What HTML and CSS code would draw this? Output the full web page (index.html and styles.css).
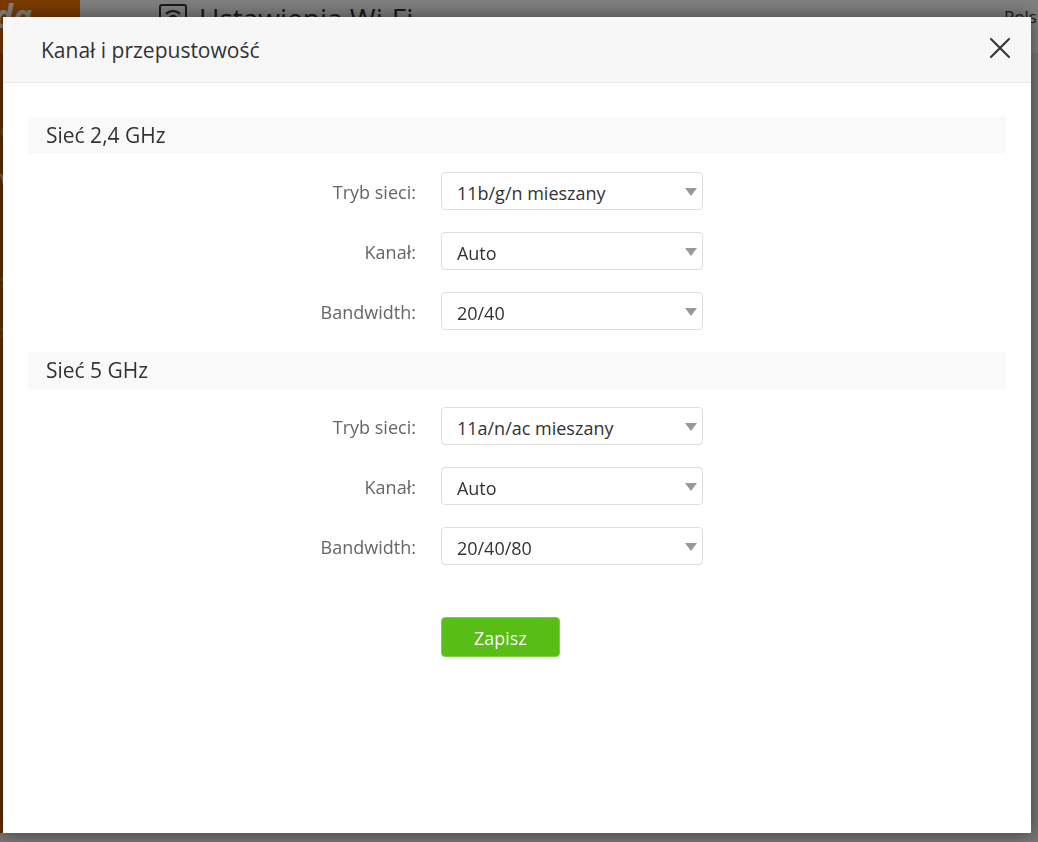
FILE: index.html
```html
<!DOCTYPE html>
<html lang="pl">

<head>
    <meta charset="UTF-8">
    <meta name="viewport" content="width=device-width, initial-scale=1.0">
    <title>Ustawienia Wi-Fi</title>
    <link rel="stylesheet" href="styles.css">
</head>

<body>

    <div class="page">
        <div class="topbar">
            <div class="logo">da</div>
            <div class="page-title">
                <svg class="wifi-icon" width="28" height="28" viewBox="0 0 28 28" fill="none" stroke="#333" stroke-width="2">
                    <rect x="1" y="1" width="26" height="26" rx="2" />
                    <path d="M7 10C11 6 17 6 21 10M10 14C12 11 16 11 18 14" />
                </svg>
                <span>Ustawienia Wi-Fi</span>
            </div>
            <span class="lang">Polski</span>
        </div>
        <div class="sidebar">
            <span>o</span>
            <span class="active">W</span>
            <span></span>
            <span>s</span>
            <span>s</span>
        </div>
    </div>

    <div class="overlay">
        <div class="modal" role="dialog" aria-labelledby="modalTitle">
            <header class="modal-header">
                <h2 id="modalTitle">Kanał i przepustowość</h2>
                <button class="close" type="button" aria-label="Zamknij">
                    <svg width="22" height="22" viewBox="0 0 22 22" fill="none" stroke="#333" stroke-width="2" stroke-linecap="round">
                        <path d="M2 2L20 20M20 2L2 20" />
                    </svg>
                </button>
            </header>

            <form class="wifi-form">
                <h3>Sieć 2,4 GHz</h3>
                <div class="row">
                    <label for="mode24">Tryb sieci:</label>
                    <div class="field">
                        <select id="mode24"><option>11b/g/n mieszany</option></select>
                    </div>
                </div>
                <div class="row">
                    <label for="channel24">Kanał:</label>
                    <div class="field">
                        <select id="channel24"><option>Auto</option></select>
                    </div>
                </div>
                <div class="row">
                    <label for="band24">Bandwidth:</label>
                    <div class="field">
                        <select id="band24"><option>20/40</option></select>
                    </div>
                </div>

                <h3>Sieć 5 GHz</h3>
                <div class="row">
                    <label for="mode5">Tryb sieci:</label>
                    <div class="field">
                        <select id="mode5"><option>11a/n/ac mieszany</option></select>
                    </div>
                </div>
                <div class="row">
                    <label for="channel5">Kanał:</label>
                    <div class="field">
                        <select id="channel5"><option>Auto</option></select>
                    </div>
                </div>
                <div class="row">
                    <label for="band5">Bandwidth:</label>
                    <div class="field">
                        <select id="band5"><option>20/40/80</option></select>
                    </div>
                </div>

                <div class="row actions">
                    <button class="save" type="submit">Zapisz</button>
                </div>
            </form>
        </div>
    </div>

</body>

</html>
```

FILE: styles.css
```css
* {
    box-sizing: border-box;
}

body {
    margin: 0;
    font-family: "Open Sans", "Noto Sans", sans-serif;
    font-size: 18px;
    color: #333;
    background-color: #eee;
}

/* page under the dialog */
.page {
    height: 100vh;
    display: flex;
    flex-direction: column;
    overflow: hidden;
    padding-bottom: 9px;
}

.topbar {
    display: flex;
    height: 53px;
    background-color: #fff;
}

.logo {
    width: 80px;
    background-color: #f47600;
    color: #fff;
    font-size: 32px;
    line-height: 32px;
    font-weight: bold;
    font-style: italic;
    text-indent: -6px;
}

.page-title {
    flex: 1;
    display: flex;
    gap: 12px;
    padding: 4px 0 0 79px;
    font-size: 28px;
    line-height: 28px;
}

.wifi-icon {
    flex: none;
}

.lang {
    width: 34px;
    font-size: 17px;
    line-height: 34px;
    white-space: nowrap;
}

.sidebar {
    flex: 1;
    display: flex;
    flex-direction: column;
    width: 80px;
    padding-top: 52px;
    background-color: #c86000;
    color: #d99a60;
    line-height: 50px;
}

.sidebar span {
    height: 50px;
}

.sidebar .active {
    color: #fff;
}

/* dialog */
.overlay {
    position: fixed;
    inset: 0;
    display: flex;
    padding: 17px 7px 9px 3px;
    background-color: rgba(0, 0, 0, 0.5);
}

.modal {
    flex: 1;
    background-color: #fff;
    box-shadow: 0 0 16px rgba(0, 0, 0, 0.5);
}

.modal-header {
    display: flex;
    justify-content: space-between;
    align-items: center;
    height: 66px;
    padding: 0 20px 0 38px;
    background-color: #f7f7f7;
    border-bottom: 1px solid #e8e8e8;
}

h2,
h3 {
    margin: 0;
    font-size: 21px;
    font-weight: normal;
}

.close {
    display: flex;
    padding: 0 0 4px;
    border: 0;
    background: none;
    cursor: pointer;
}

.wifi-form {
    padding: 34px 25px;
}

.wifi-form h3 {
    margin-bottom: 18px;
    padding-left: 18px;
    line-height: 37px;
    background-color: #f9f9f9;
}

.row {
    display: grid;
    grid-template-columns: 19fr 26fr;
    align-items: center;
    margin-bottom: 22px;
}

.row label {
    padding: 2px 25px 0 0;
    text-align: right;
    color: #666;
}

.field {
    position: relative;
    width: 262px;
}

.field select {
    display: block;
    appearance: none;
    width: 100%;
    height: 38px;
    padding: 4px 30px 0 15px;
    border: 1px solid #ddd;
    border-radius: 4px;
    background-color: #fff;
    color: #333;
    font: inherit;
}

.field::after {
    content: "";
    position: absolute;
    top: 16px;
    right: 6px;
    border: 6px solid transparent;
    border-top: 8px solid #999;
    border-bottom: 0;
    pointer-events: none;
}

.actions {
    margin-top: 52px;
}

.save {
    grid-column: 2;
    width: 119px;
    height: 40px;
    padding: 2px 0 0;
    border: 1px solid #7fcb4a;
    border-radius: 4px;
    background-color: #58be15;
    color: #fff;
    font: inherit;
    cursor: pointer;
}
```
